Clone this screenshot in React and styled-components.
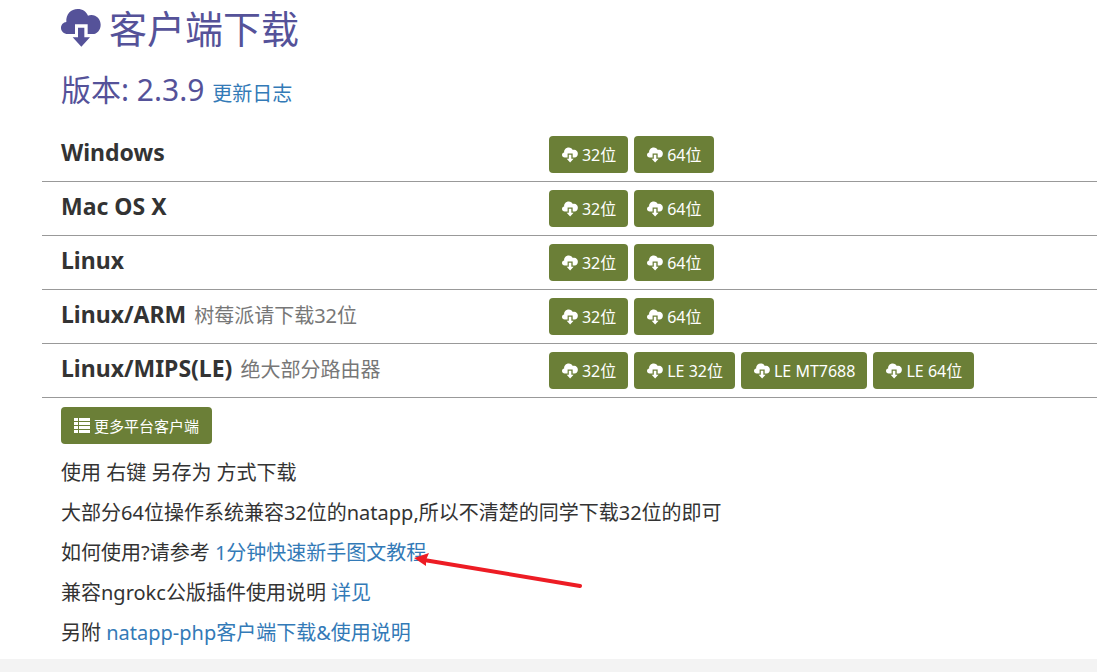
import React from "react";
import styled, { createGlobalStyle } from "styled-components";

const GlobalStyle = createGlobalStyle`
  * {
    box-sizing: border-box;
  }

  body {
    margin: 0;
    background: #f3f3f3;
    color: #333;
    font-family: "Noto Sans", "Noto Sans CJK SC", sans-serif;
    font-size: 20px;
    line-height: 28px;
  }
`;

const Page = styled.main`
  padding: 0 0 12px 42px;
  background: #fff;
  overflow: hidden;
`;

const Header = styled.header`
  padding-left: 19px;
  color: #555299;
`;

const Title = styled.h1`
  display: flex;
  align-items: center;
  gap: 8px;
  margin: 0;
  font-size: 38px;
  font-weight: 400;
  line-height: 56px;
`;

const Version = styled.h2`
  margin: 12px 0 12px;
  font-size: 30px;
  font-weight: 400;
  line-height: 44px;
`;

const Link = styled.a`
  color: #337ab7;
  font-size: 20px;
  text-decoration: none;

  &:hover {
    text-decoration: underline;
  }
`;

const PlatformRow = styled.section`
  display: grid;
  grid-template-columns: 12fr 13fr;
  column-gap: 1px;
  padding: 8px 0;
  border-bottom: 1px solid #999;
`;

const PlatformName = styled.h3`
  margin: 0;
  padding-left: 19px;
  font-size: 23px;
  font-weight: 700;
  line-height: 32px;
`;

const Note = styled.small`
  margin-left: 2px;
  color: #777;
  font-size: 20px;
  font-weight: 400;
`;

const Buttons = styled.div`
  display: flex;
  gap: 6px;
`;

const Button = styled.button`
  display: inline-flex;
  align-items: center;
  gap: 4px;
  height: 37px;
  padding: 0 13px;
  border: 0;
  border-radius: 4px;
  background: #6b7f37;
  color: #fff;
  font-family: inherit;
  font-size: 15px;
  line-height: 20px;
  white-space: nowrap;
  cursor: pointer;
`;

const DownloadButton = styled(Button)`
  padding: 0 12px 0 13px;
  font-size: 16px;
`;

const Notes = styled.div`
  padding: 9px 0 0 19px;
`;

const Paragraph = styled.p`
  margin: 12px 0 0;
`;

const MoreClients = styled.div`
  padding-bottom: 3px;
`;

const Pointed = styled.span`
  position: relative;
`;

const Arrow = styled.svg`
  position: absolute;
  top: 12px;
  left: calc(100% - 12px);
  pointer-events: none;
`;

const CloudDownload = ({ size }) => (
  <svg width={size} height={size} viewBox="0 0 120 120" fill="currentColor" aria-hidden="true">
    <path d="M20 78C9 78 0 70 0 60C0 50 7 43 16 42C14 19 30 3 50 3C65 3 76 11 81 23C84 22 87 21 91 21C107 21 119 34 119 50C119 66 108 78 95 78H80V49H42V78Z" />
    <path d="M51 59H70V88H87L61 116L35 88H51Z" />
  </svg>
);

const ListIcon = () => (
  <svg width="16" height="15" viewBox="0 0 16 15" fill="currentColor" aria-hidden="true">
    <path d="M0 0h4v3H0zM5 0h11v3H5zM0 4h4v3H0zM5 4h11v3H5zM0 8h4v3H0zM5 8h11v3H5zM0 12h4v3H0zM5 12h11v3H5z" />
  </svg>
);

const platforms = [
  { name: "Windows", builds: ["32位", "64位"] },
  { name: "Mac OS X", builds: ["32位", "64位"] },
  { name: "Linux", builds: ["32位", "64位"] },
  { name: "Linux/ARM", note: "树莓派请下载32位", builds: ["32位", "64位"] },
  {
    name: "Linux/MIPS(LE)",
    note: "绝大部分路由器",
    builds: ["32位", "LE 32位", "LE MT7688", "LE 64位"],
  },
];

const App = () => {
  return (
    <>
      <GlobalStyle />
      <Page lang="zh-CN">
        <Header>
          <Title>
            <CloudDownload size={40} />
            客户端下载
          </Title>
          <Version>
            版本: 2.3.9 <Link href="#">更新日志</Link>
          </Version>
        </Header>

        {platforms.map((platform) => (
          <PlatformRow key={platform.name}>
            <PlatformName>
              {platform.name} {platform.note && <Note>{platform.note}</Note>}
            </PlatformName>
            <Buttons>
              {platform.builds.map((build) => (
                <DownloadButton key={build} type="button">
                  <CloudDownload size={16} />
                  {build}
                </DownloadButton>
              ))}
            </Buttons>
          </PlatformRow>
        ))}

        <Notes>
          <MoreClients>
            <Button type="button">
              <ListIcon />
              更多平台客户端
            </Button>
          </MoreClients>
          <Paragraph>使用 右键 另存为 方式下载</Paragraph>
          <Paragraph>
            大部分64位操作系统兼容32位的natapp,所以不清楚的同学下载32位的即可
          </Paragraph>
          <Paragraph>
            如何使用?请参考{" "}
            <Pointed>
              <Link href="#">1分钟快速新手图文教程</Link>
              <Arrow width="170" height="42" viewBox="0 0 170 42" aria-hidden="true">
                <path d="M10 9L166 35" stroke="#ed1c24" strokeWidth="4" strokeLinecap="round" />
                <path d="M0 7L15 2L12 9L12 15Z" fill="#ed1c24" />
              </Arrow>
            </Pointed>
          </Paragraph>
          <Paragraph>
            兼容ngrokc公版插件使用说明 <Link href="#">详见</Link>
          </Paragraph>
          <Paragraph>
            另附 <Link href="#">natapp-php客户端下载&amp;使用说明</Link>
          </Paragraph>
        </Notes>
      </Page>
    </>
  );
};

export default App;
